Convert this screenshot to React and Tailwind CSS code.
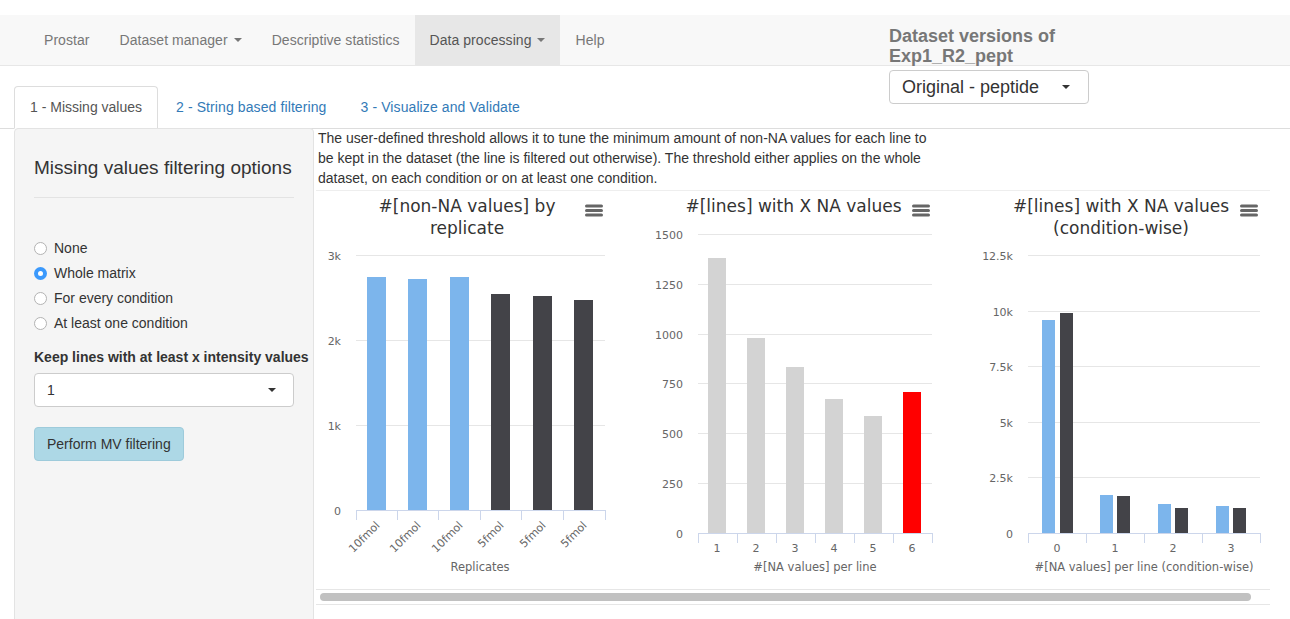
import React from "react";

const BLUE = "#7cb5ec";
const DARK = "#434348";
const GRAY = "#d3d3d3";

const Caret = ({ color = "border-t-[#777]" }) => (
	<span className={`inline-block w-0 h-0 border-x-[4px] border-t-[4px] border-x-transparent ${color}`} />
);

const NavItem = ({ label, dropdown, active }) => (
	<div
		className={`h-full flex items-center px-[15px] text-[14px] tracking-[0.05px] ${
			active ? "bg-[#e7e7e7] text-[#555]" : "text-[#777]"
		}`}
	>
		{label}
		{dropdown && (
			<span className="ml-[6px] flex items-center">
				<Caret />
			</span>
		)}
	</div>
);

const Radio = ({ label, checked }) => (
	<label className="flex items-center h-[20px] gap-[7px] text-[14px] text-[#333]">
		{checked ? (
			<span className="w-[13px] h-[13px] rounded-full bg-[#3b99fc] flex items-center justify-center">
				<span className="w-[5px] h-[5px] rounded-full bg-white" />
			</span>
		) : (
			<span className="w-[13px] h-[13px] rounded-full border border-[#b3b3b3] bg-white" />
		)}
		{label}
	</label>
);

const Menu = ({ x }) => (
	<g stroke="#666" strokeWidth="3" strokeLinecap="round">
		{[15, 19.5, 24].map((y) => (
			<line key={y} x1={x + 1.5} x2={x + 16.5} y1={y} y2={y} />
		))}
	</g>
);

const Chart = ({ width, titleX, title, grid, gridX1, gridX2, labelRight, axisY, bars, ticks, xLabels, rotate, axisTitle, axisTitleX, menuX }) => (
	<svg width={width} height={398} className="shrink-0 font-['DejaVu_Sans',sans-serif]">
		<text textAnchor="middle" fill="#333" fontSize="17">
			{title.map((t, i) => (
				<tspan key={i} x={titleX} y={21 + i * 22}>
					{t}
				</tspan>
			))}
		</text>
		<Menu x={menuX} />
		{grid.map((g) => (
			<g key={g.label}>
				<line x1={gridX1} x2={gridX2} y1={g.y + 0.5} y2={g.y + 0.5} stroke="#e6e6e6" />
				<text x={labelRight} y={g.y + 5} textAnchor="end" fontSize="11" fill="#666">
					{g.label}
				</text>
			</g>
		))}
		{bars.map((b, i) => (
			<rect key={i} x={b.x} y={b.top} width={b.w} height={axisY - b.top} fill={b.color} />
		))}
		<line x1={gridX1} x2={gridX2} y1={axisY + 0.5} y2={axisY + 0.5} stroke="#ccd6eb" />
		{ticks.map((t) => (
			<line key={t} x1={t + 0.5} x2={t + 0.5} y1={axisY} y2={axisY + 10} stroke="#ccd6eb" />
		))}
		{xLabels.map((l, i) =>
			rotate ? (
				<text
					key={i}
					x={l.x + 4}
					y={axisY + 16}
					textAnchor="end"
					fontSize="11"
					fill="#666"
					transform={`rotate(-45 ${l.x + 4} ${axisY + 16})`}
				>
					{l.text}
				</text>
			) : (
				<text key={i} x={l.x} y={axisY + 19} textAnchor="middle" fontSize="11" fill="#666">
					{l.text}
				</text>
			)
		)}
		<text x={axisTitleX} y={380} textAnchor="middle" fontSize="11.5" fill="#666">
			{axisTitle}
		</text>
	</svg>
);

const replicateBars = [
	{ x: 51, top: 86, color: BLUE },
	{ x: 92, top: 88, color: BLUE },
	{ x: 134, top: 86, color: BLUE },
	{ x: 175, top: 103, color: DARK },
	{ x: 217, top: 105, color: DARK },
	{ x: 258, top: 109, color: DARK },
].map((b) => ({ ...b, w: 19 }));

const naBars = [
	{ x: 68, top: 67, color: GRAY },
	{ x: 107, top: 147, color: GRAY },
	{ x: 146, top: 176, color: GRAY },
	{ x: 185, top: 208, color: GRAY },
	{ x: 224, top: 225, color: GRAY },
	{ x: 263, top: 201, color: "#ff0000" },
].map((b) => ({ ...b, w: 18 }));

const condBars = [
	{ x: 82, top: 129, color: BLUE },
	{ x: 100, top: 122, color: DARK },
	{ x: 140, top: 304, color: BLUE },
	{ x: 157, top: 305, color: DARK },
	{ x: 198, top: 313, color: BLUE },
	{ x: 215, top: 317, color: DARK },
	{ x: 256, top: 315, color: BLUE },
	{ x: 273, top: 317, color: DARK },
].map((b) => ({ ...b, w: 13 }));

const App = () => {
	return (
		<div className="w-[1290px] h-[619px] overflow-hidden bg-white pt-[15px] font-['Liberation_Sans',Arial,sans-serif]">
			{/* navbar */}
			<div className="relative h-[51px] bg-[#f8f8f8] border-b border-[#e7e7e7] flex pl-[29px]">
				<NavItem label="Prostar" />
				<NavItem label="Dataset manager" dropdown />
				<NavItem label="Descriptive statistics" />
				<NavItem label="Data processing" dropdown active />
				<NavItem label="Help" />

				<div className="absolute left-[889px] top-[11px] z-10">
					<div className="text-[18px] leading-[20px] font-bold text-[#777]">
						Dataset versions of
						<br />
						Exp1_R2_pept
					</div>
					<div className="mt-[4px] w-[200px] h-[34px] border border-[#ccc] rounded-[4px] bg-white flex items-center justify-between pl-[12px] pr-[18px] text-[18px] text-[#333]">
						<span>Original - peptide</span>
						<Caret color="border-t-[#333]" />
					</div>
				</div>
			</div>

			{/* tabs */}
			<div className="mt-[20px] flex pl-[14px] border-b border-[#ddd] text-[14px] leading-[20px]">
				<div className="px-[15px] py-[10px] border border-[#ddd] border-b-white rounded-t-[4px] bg-white text-[#555] -mb-px mr-[2px]">
					1 - Missing values
				</div>
				<div className="px-[15px] py-[10px] border border-transparent text-[#337ab7] mr-[2px] tracking-[0.1px]">
					2 - String based filtering
				</div>
				<div className="px-[15px] py-[10px] border border-transparent text-[#337ab7] mr-[2px] tracking-[0.1px]">
					3 - Visualize and Validate
				</div>
			</div>

			<div className="flex -mt-px">
				{/* sidebar */}
				<div className="ml-[14px] w-[300px] h-[560px] shrink-0 bg-[#f5f5f5] border border-[#e3e3e3] rounded-[4px] p-[19px]">
					<div className="mt-[10px] text-[19px] leading-[20px] font-medium text-[#333]">
						Missing values filtering options
					</div>
					<div className="mt-[19px] border-t border-[#e3e3e3]" />
					<div className="mt-[40px] flex flex-col gap-[5px]">
						<Radio label="None" />
						<Radio label="Whole matrix" checked />
						<Radio label="For every condition" />
						<Radio label="At least one condition" />
					</div>
					<div className="mt-[14px] text-[14px] leading-[20px] font-bold text-[#333] whitespace-nowrap">
						Keep lines with at least x intensity values
					</div>
					<div className="mt-[6px] h-[34px] bg-white border border-[#ccc] rounded-[4px] flex items-center justify-between pl-[12px] pr-[17px] text-[14px] text-[#333]">
						<span>1</span>
						<Caret color="border-t-[#333]" />
					</div>
					<button className="mt-[20px] h-[34px] px-[12px] bg-[#add8e6] border border-[#9ecbdb] rounded-[4px] text-[14px] text-[#333]">
						Perform MV filtering
					</button>
				</div>

				{/* main */}
				<div className="flex-1 flex flex-col">
					<p className="ml-[4px] w-[624px] text-[14px] leading-[20px] text-[#333]">
						The user-defined threshold allows it to tune the minimum amount of non-NA values for each line to be kept in
						the dataset (the line is filtered out otherwise). The threshold either applies on the whole dataset, on each
						condition or on at least one condition.
					</p>
					<div className="mt-[2px] ml-[2px] w-[954px] border-t border-[#eee] overflow-hidden">
						<div className="flex">
							<Chart
								width={324}
								titleX={151}
								title={["#[non-NA values] by", "replicate"]}
								menuX={269}
								grid={[
									{ label: "3k", y: 64 },
									{ label: "2k", y: 149 },
									{ label: "1k", y: 234 },
									{ label: "0", y: 319 },
								]}
								gridX1={40}
								gridX2={289}
								labelRight={25}
								axisY={319}
								bars={replicateBars}
								ticks={[40, 81, 122, 164, 205, 247, 289]}
								rotate
								xLabels={["10fmol", "10fmol", "10fmol", "5fmol", "5fmol", "5fmol"].map((t, i) => ({
									text: t,
									x: replicateBars[i].x + 9.5,
								}))}
								axisTitle="Replicates"
								axisTitleX={164}
							/>
							<Chart
								width={320}
								titleX={153.5}
								title={["#[lines] with X NA values"]}
								menuX={272}
								grid={[1500, 1250, 1000, 750, 500, 250, 0].map((v, i) => ({
									label: String(v),
									y: Math.round(43 + i * 49.83),
								}))}
								gridX1={58}
								gridX2={292}
								labelRight={43}
								axisY={342}
								bars={naBars}
								ticks={[58, 97, 136, 175, 214, 253, 292]}
								xLabels={naBars.map((b, i) => ({ text: String(i + 1), x: b.x + 9 }))}
								axisTitle="#[NA values] per line"
								axisTitleX={175}
							/>
							<Chart
								width={330}
								titleX={161}
								title={["#[lines] with X NA values", "(condition-wise)"]}
								menuX={280}
								grid={["12.5k", "10k", "7.5k", "5k", "2.5k", "0"].map((v, i) => ({
									label: v,
									y: Math.round(64 + i * 55.6),
								}))}
								gridX1={68}
								gridX2={300}
								labelRight={53}
								axisY={342}
								bars={condBars}
								ticks={[68, 126, 184, 242, 300]}
								xLabels={[97, 155, 213, 271].map((x, i) => ({ text: String(i), x }))}
								axisTitle="#[NA values] per line (condition-wise)"
								axisTitleX={184}
							/>
						</div>
						<div className="h-[16px] border-y border-[#e6e6e6] pt-[3px] pl-[4px]">
							<div className="w-[931px] h-[8px] rounded-full bg-[#c1c1c1]" />
						</div>
					</div>
				</div>
			</div>
		</div>
	);
};

export default App;
